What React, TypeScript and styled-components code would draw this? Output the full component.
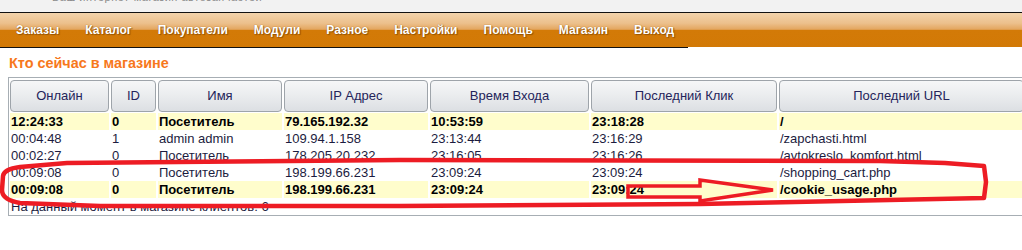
import styled, { createGlobalStyle } from "styled-components";

const GlobalStyle = createGlobalStyle`
  body {
    margin: 0;
    background: #fff;
    font-family: "Liberation Sans", Arial, sans-serif;
    overflow: hidden;
  }
`;

const Page = styled.div`
  position: relative;
  width: 1022px;
  height: 250px;
  overflow: hidden;
`;

const TopStrip = styled.div`
  height: 12px;
  background: #f2f2f2;
  border-bottom: 1px solid #111;
  overflow: hidden;
  padding-left: 52px;
`;

const Tagline = styled.span`
  display: block;
  margin-top: -9px;
  font-size: 11px;
  line-height: 13px;
  color: #8a8a8a;
  letter-spacing: 0.5px;
`;

const MenuBar = styled.div`
  height: 34px;
  background: linear-gradient(
    to bottom,
    #f2d3ab 0%,
    #ecc08c 30%,
    #e3a65f 48%,
    #d37a07 51%,
    #d27906 100%
  );
`;

const Menu = styled.ul`
  display: flex;
  width: 688px;
  height: 34px;
  margin: 0;
  padding: 0 0 0 3px;
  list-style: none;
  box-sizing: border-box;
  box-shadow: 0 1px 0 #111;
`;

const MenuItem = styled.li`
  padding: 0 13px;
  font-size: 12px;
  font-weight: bold;
  line-height: 34px;
  color: #fff;
  text-shadow: 0 0 1px #8a4d00, 1px 1px 1px rgba(110, 60, 0, 0.6);
`;

const Title = styled.h2`
  margin: 9px 0 6px;
  padding-left: 9px;
  font-size: 14.4px;
  line-height: 15px;
  font-weight: bold;
  color: #f7781c;
`;

const Table = styled.div`
  margin-left: 8px;
  padding: 2px 0 0 1px;
  border-top: 1px solid #a7aeb4;
  border-left: 1px solid #a7aeb4;
  border-bottom: 1px solid #a7aeb4;
`;

const Row = styled.div<{ $head?: boolean }>`
  display: grid;
  grid-template-columns: 99px 45px 124px 144px 159px 186px 245px;
  column-gap: 2px;
  margin-bottom: ${(p) => (p.$head ? "1px" : "0")};
`;

const HeadCell = styled.div`
  height: 32px;
  box-sizing: border-box;
  border: 1px solid #9ea4aa;
  border-radius: 4px;
  background: linear-gradient(to bottom, #f6f7f8 0%, #eaecee 50%, #dcdfe3 100%);
  font-size: 13px;
  line-height: 30px;
  text-align: center;
  color: #24245a;
`;

const Cell = styled.div<{ $hot?: boolean }>`
  height: 17px;
  padding: 0 1px;
  font-size: 13px;
  line-height: 17px;
  white-space: nowrap;
  overflow: hidden;
  background: ${(p) => (p.$hot ? "#fffdcc" : "transparent")};
  font-weight: ${(p) => (p.$hot ? "bold" : "normal")};
  color: ${(p) => (p.$hot ? "#000" : "#1c1c40")};
`;

const Footer = styled.div`
  height: 17px;
  padding-left: 1px;
  font-size: 13px;
  line-height: 17px;
  color: #1c1c40;
`;

const Scribble = styled.svg`
  position: absolute;
  top: 0;
  left: 0;
  pointer-events: none;
`;

const menu = [
  "Заказы",
  "Каталог",
  "Покупатели",
  "Модули",
  "Разное",
  "Настройки",
  "Помощь",
  "Магазин",
  "Выход",
];

const columns = [
  "Онлайн",
  "ID",
  "Имя",
  "IP Адрес",
  "Время Входа",
  "Последний Клик",
  "Последний URL",
];

type Visitor = {
  online: string;
  id: string;
  name: string;
  ip: string;
  entered: string;
  lastClick: string;
  url: string;
  hot?: boolean;
};

const visitors: Visitor[] = [
  { online: "12:24:33", id: "0", name: "Посетитель", ip: "79.165.192.32", entered: "10:53:59", lastClick: "23:18:28", url: "/", hot: true },
  { online: "00:04:48", id: "1", name: "admin admin", ip: "109.94.1.158", entered: "23:13:44", lastClick: "23:16:29", url: "/zapchasti.html" },
  { online: "00:02:27", id: "0", name: "Посетитель", ip: "178.205.20.232", entered: "23:16:05", lastClick: "23:16:26", url: "/avtokreslo_komfort.html" },
  { online: "00:09:08", id: "0", name: "Посетитель", ip: "198.199.66.231", entered: "23:09:24", lastClick: "23:09:24", url: "/shopping_cart.php" },
  { online: "00:09:08", id: "0", name: "Посетитель", ip: "198.199.66.231", entered: "23:09:24", lastClick: "23:09:24", url: "/cookie_usage.php", hot: true },
];

export default function App() {
  return (
    <Page>
      <GlobalStyle />
      <TopStrip>
        <Tagline>Ваш интернет-магазин автозапчастей</Tagline>
      </TopStrip>
      <MenuBar>
        <Menu>
          {menu.map((item) => (
            <MenuItem key={item}>{item}</MenuItem>
          ))}
        </Menu>
      </MenuBar>

      <Title>Кто сейчас в магазине</Title>

      <Table>
        <Row $head>
          {columns.map((c) => (
            <HeadCell key={c}>{c}</HeadCell>
          ))}
        </Row>
        {visitors.map((v, i) => (
          <Row key={i}>
            <Cell $hot={v.hot}>{v.online}</Cell>
            <Cell $hot={v.hot}>{v.id}</Cell>
            <Cell $hot={v.hot}>{v.name}</Cell>
            <Cell $hot={v.hot}>{v.ip}</Cell>
            <Cell $hot={v.hot}>{v.entered}</Cell>
            <Cell $hot={v.hot}>{v.lastClick}</Cell>
            <Cell $hot={v.hot}>{v.url}</Cell>
          </Row>
        ))}
        <Footer>На данный момент в магазине клиентов: 6</Footer>
      </Table>

      {/* red hand-drawn marks over the screenshot */}
      <Scribble width="1022" height="250" viewBox="0 0 1022 250">
        <path
          d="M 67 163 L 400 160 L 880 161 L 945 163 L 984 166 L 986 182 L 984 198 L 700 204 L 400 206 L 100 206 L 20 203 Q 2 200 2 190 L 3 176 Q 4 169 20 167 Z"
          fill="none"
          stroke="#ed1c24"
          strokeWidth="4.5"
          strokeLinejoin="round"
        />
        <path
          d="M 628 186 L 700 186 L 700 180 L 773 190 L 700 201 L 700 197 L 628 197 Z"
          fill="none"
          stroke="#ed1c24"
          strokeWidth="3.5"
          strokeLinejoin="miter"
        />
      </Scribble>
    </Page>
  );
}
